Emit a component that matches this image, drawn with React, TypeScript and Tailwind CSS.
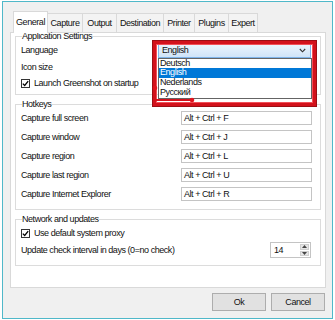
import React from 'react';

const tabs = [
  { name: 'General', w: 'w-[35px]' },
  { name: 'Capture', w: 'w-[35px]' },
  { name: 'Output', w: 'w-[34px]' },
  { name: 'Destination', w: 'w-[47px]' },
  { name: 'Printer', w: 'w-[31px]' },
  { name: 'Plugins', w: 'w-[34px]' },
  { name: 'Expert', w: 'w-[29px]' },
];

const hotkeys = [
  ['Capture full screen', 'Alt + Ctrl + F'],
  ['Capture window', 'Alt + Ctrl + J'],
  ['Capture region', 'Alt + Ctrl + L'],
  ['Capture last region', 'Alt + Ctrl + U'],
  ['Capture Internet Explorer', 'Alt + Ctrl + R'],
];

const languages = ['Deutsch', 'English', 'Nederlands', 'Русский'];

const Check: React.FC<{ label: string }> = ({ label }) => (
  <div className="flex items-center h-[12px] gap-[4px]">
    <div className="w-[9px] h-[9px] border border-[#333] bg-white flex items-center justify-center">
      <svg width="7" height="7" viewBox="0 0 7 7">
        <path d="M0.8 3.6 L2.7 5.5 L6.2 1.2" fill="none" stroke="#000" strokeWidth="1.3" />
      </svg>
    </div>
    <span>{label}</span>
  </div>
);

const App: React.FC = () => {
  return (
    <div
      className="w-[335px] h-[320px] bg-white pl-[2px] pt-[1px] text-[9px] leading-[10px] tracking-[-0.45px] text-[#111]"
      style={{ fontFamily: '"Liberation Sans", Arial, sans-serif' }}
    >
      <div className="w-[331px] h-[318px] border border-[#4fb8c9] bg-[#f0f0f0] flex flex-col">
        {/* tabs */}
        <div className="flex items-end h-[21px] mt-[9px] ml-[10px]">
          {tabs.map((t, i) =>
            i === 0 ? (
              <div
                key={t.name}
                className={`${t.w} h-[22px] -mb-px relative z-10 bg-white border border-b-0 border-[#d9d9d9] flex items-center justify-center pb-[2px]`}
              >
                {t.name}
              </div>
            ) : (
              <div
                key={t.name}
                className={`${t.w} h-[19px] bg-[#f3f3f3] border border-l-0 border-b-0 border-[#d9d9d9] flex items-center justify-center`}
              >
                {t.name}
              </div>
            )
          )}
        </div>

        {/* panel */}
        <div className="ml-[7px] w-[316px] h-[256px] border border-[#d9d9d9] bg-white px-[4px]">
          {/* Application Settings */}
          <fieldset className="-mt-[2px] border border-[#dcdcdc] pl-[5px] pr-[8px] pb-[5px]">
            <legend className="leading-[10px] ml-[1px]">Application Settings</legend>
            <div className="flex flex-col mt-[2px] gap-[3px]">
              <div className="flex items-center h-[14px]">
                <span>Language</span>
                <div className="relative ml-auto mr-[1px] w-[153px] h-[15px]">
                  <div className="w-full h-full border border-[#7eb4ea] bg-gradient-to-b from-[#ecf4fc] to-[#cfe4f8] flex items-center pl-[3px] pr-[4px]">
                    <span>English</span>
                    <svg className="ml-auto" width="7" height="5" viewBox="0 0 7 5">
                      <path d="M0.8 1 L3.5 3.8 L6.2 1" fill="none" stroke="#333" strokeWidth="1.1" />
                    </svg>
                  </div>
                  <div className="absolute left-0 top-full w-[154px] border border-[#646464] bg-white z-20">
                    {languages.map((l) => (
                      <div
                        key={l}
                        className={`h-[9.75px] leading-[9.75px] pl-[1px] ${
                          l === 'English' ? 'bg-[#0078d7] text-white' : ''
                        }`}
                      >
                        {l}
                      </div>
                    ))}
                  </div>
                  <div className="absolute -left-[5px] -top-[2px] w-[163px] h-[65px] border-[3px] border-[#d3121c] shadow-[0_0_0_1px_#9c0e14,inset_0_0_0_1px_#f25058] z-30 pointer-events-none" />
                  <svg
                    className="absolute -left-[6px] top-[42px] z-30"
                    width="44"
                    height="18"
                    viewBox="0 0 44 18"
                  >
                    <path d="M3 3 L3 15 L40 15" fill="none" stroke="#d3121c" strokeWidth="2" />
                    <circle cx="3" cy="3" r="2.3" fill="#e0141e" />
                    <circle cx="40" cy="15" r="2.3" fill="#e0141e" />
                  </svg>
                </div>
              </div>
              <div className="flex items-center h-[14px]">
                <span>Icon size</span>
              </div>
              <Check label="Launch Greenshot on startup" />
            </div>
          </fieldset>

          {/* Hotkeys */}
          <fieldset className="mt-[4px] border border-[#dcdcdc] pl-[5px] pr-[8px] pb-[8px]">
            <legend className="leading-[10px] ml-[1px]">Hotkeys</legend>
            <div className="flex flex-col mt-[2px] gap-[5px]">
              {hotkeys.map(([label, key]) => (
                <div key={label} className="flex items-center justify-between h-[14px]">
                  <span>{label}</span>
                  <div className="w-[131px] h-[14px] border border-[#c4c4c4] flex items-center pl-[2px]">
                    {key}
                  </div>
                </div>
              ))}
            </div>
          </fieldset>

          {/* Network and updates */}
          <fieldset className="mt-[4px] border border-[#dcdcdc] pl-[5px] pr-[8px] pb-[7px]">
            <legend className="leading-[10px] ml-[1px]">Network and updates</legend>
            <div className="flex flex-col mt-[3px] gap-[3px]">
              <Check label="Use default system proxy" />
              <div className="flex items-center h-[16px]">
                <span>Update check interval in days (0=no check)</span>
                <div className="ml-auto mr-[1px] w-[41px] h-[16px] border border-[#c4c4c4] flex items-center pl-[3px]">
                  <span>14</span>
                  <div className="ml-auto mr-[1px] w-[9px] h-[12px] flex flex-col gap-px">
                    <div className="flex-1 bg-[#e6e6e6] border border-[#cfcfcf] flex items-center justify-center">
                      <svg width="5" height="3" viewBox="0 0 5 3">
                        <path d="M0 3 L2.5 0 L5 3 Z" fill="#444" />
                      </svg>
                    </div>
                    <div className="flex-1 bg-[#e6e6e6] border border-[#cfcfcf] flex items-center justify-center">
                      <svg width="5" height="3" viewBox="0 0 5 3">
                        <path d="M0 0 L2.5 3 L5 0 Z" fill="#444" />
                      </svg>
                    </div>
                  </div>
                </div>
              </div>
            </div>
          </fieldset>
        </div>

        {/* buttons */}
        <div className="flex justify-end gap-[5px] mt-[5px] mr-[7px]">
          <button className="w-[54px] h-[18px] border border-[#adadad] bg-[#e1e1e1]">Ok</button>
          <button className="w-[54px] h-[18px] border border-[#adadad] bg-[#e1e1e1]">Cancel</button>
        </div>
      </div>
    </div>
  );
};

export default App;
